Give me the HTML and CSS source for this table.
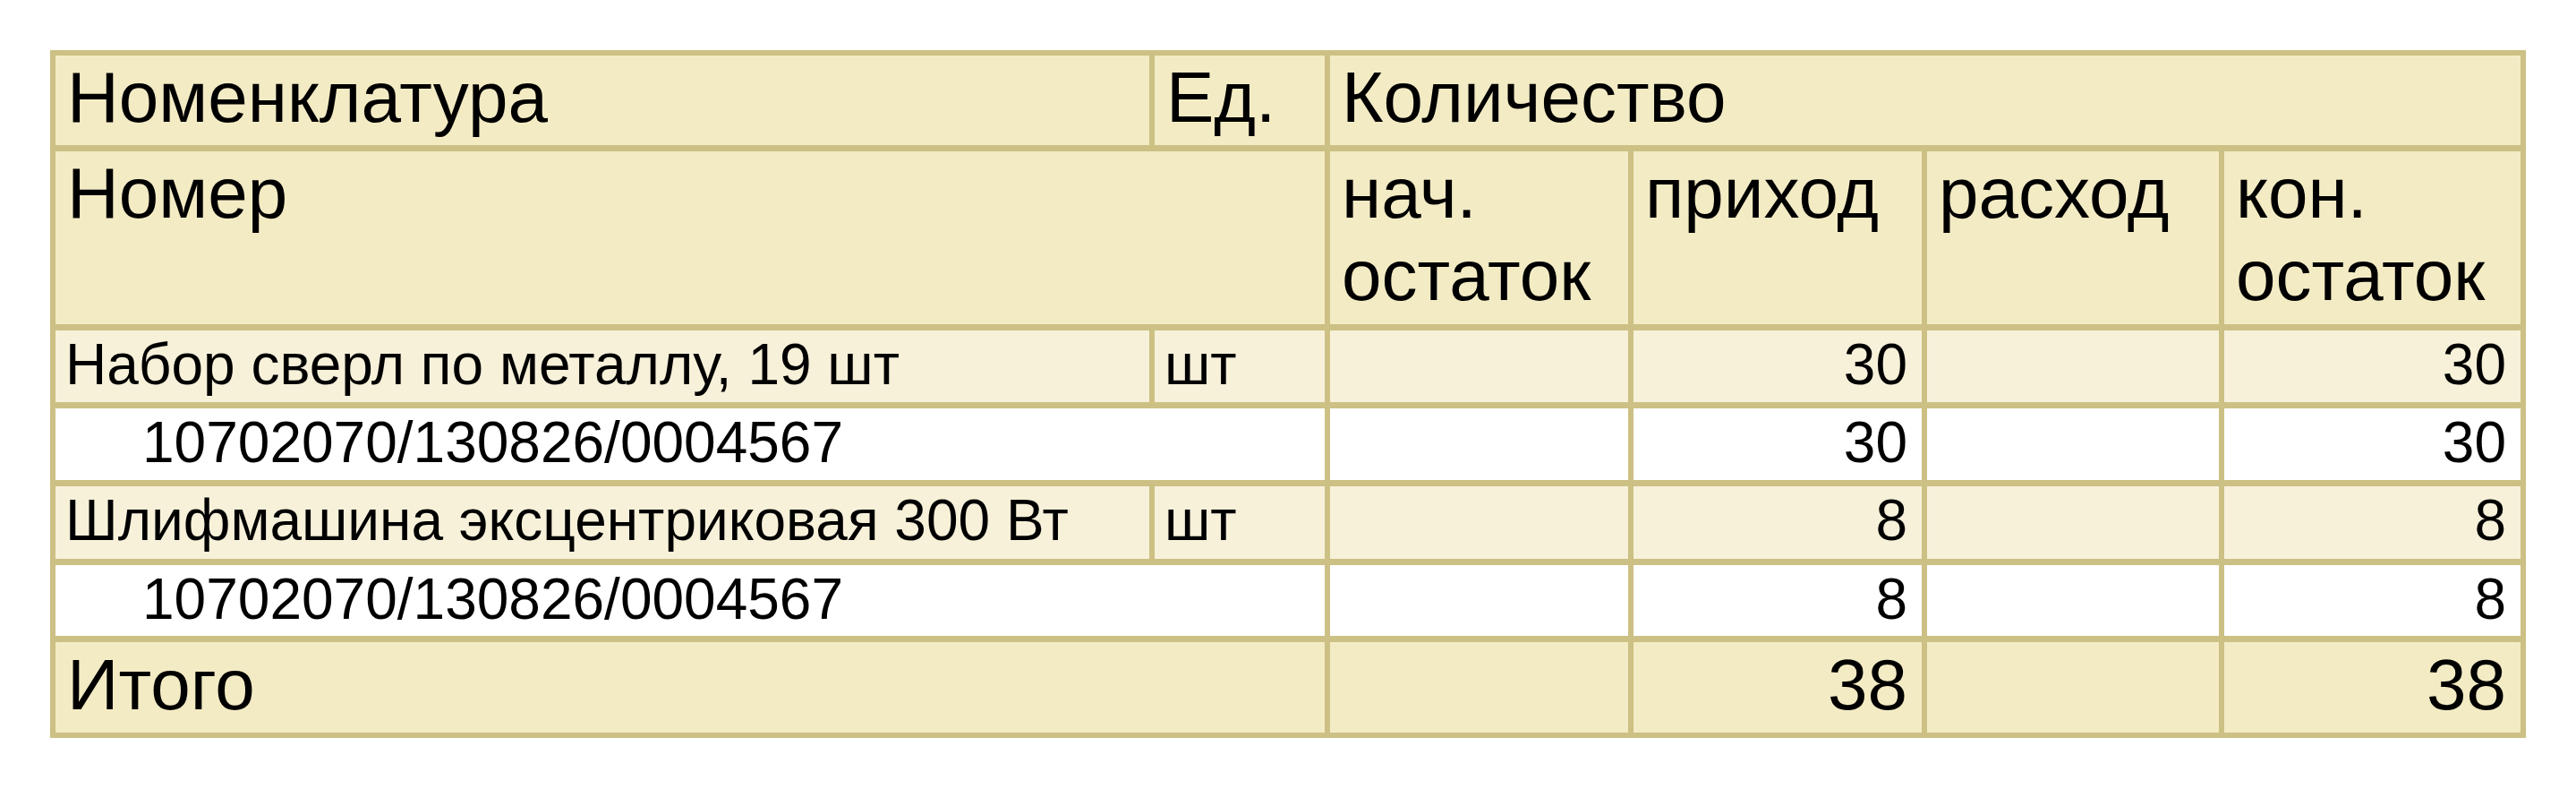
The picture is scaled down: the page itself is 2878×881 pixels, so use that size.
FILE: index.html
```html
<!DOCTYPE html>
<html lang="ru">
<head>
<meta charset="utf-8">
<title>Ведомость</title>
<link rel="stylesheet" href="styles.css">
</head>
<body>
<div class="sheet">
  <div class="cell head">Номенклатура</div>
  <div class="cell head">Ед.</div>
  <div class="cell head span4">Количество</div>

  <div class="cell head span2 tall">Номер</div>
  <div class="cell head tall">нач. остаток</div>
  <div class="cell head tall">приход</div>
  <div class="cell head tall">расход</div>
  <div class="cell head tall">кон. остаток</div>

  <div class="cell item">Набор сверл по металлу, 19 шт</div>
  <div class="cell item">шт</div>
  <div class="cell item num"></div>
  <div class="cell item num">30</div>
  <div class="cell item num"></div>
  <div class="cell item num">30</div>

  <div class="cell sub span2 indent">10702070/130826/0004567</div>
  <div class="cell sub num"></div>
  <div class="cell sub num">30</div>
  <div class="cell sub num"></div>
  <div class="cell sub num">30</div>

  <div class="cell item">Шлифмашина эксцентриковая 300 Вт</div>
  <div class="cell item">шт</div>
  <div class="cell item num"></div>
  <div class="cell item num">8</div>
  <div class="cell item num"></div>
  <div class="cell item num">8</div>

  <div class="cell sub span2 indent">10702070/130826/0004567</div>
  <div class="cell sub num"></div>
  <div class="cell sub num">8</div>
  <div class="cell sub num"></div>
  <div class="cell sub num">8</div>

  <div class="cell total span2">Итого</div>
  <div class="cell total num"></div>
  <div class="cell total num">38</div>
  <div class="cell total num"></div>
  <div class="cell total num">38</div>
</div>
</body>
</html>
```
FILE: styles.css
```css
html, body {
  margin: 0;
  padding: 0;
  background: #ffffff;
}

body {
  font-family: "Liberation Sans", Arial, sans-serif;
  color: #000000;
}

.sheet {
  margin: 56px 0 0 56px;
  width: 2766px;
  box-sizing: border-box;
  display: grid;
  grid-template-columns: 1222px 190px 333px 322px 326px 331px;
  grid-template-rows: 100px 193px 80px 80px 81px 79px 101px;
  column-gap: 6px;
  row-gap: 7px;
  padding: 6px;
  background: #ccc084;
}

.cell {
  box-sizing: border-box;
  padding: 1px 10px 0 13px;
  overflow: hidden;
}

.span2 { grid-column: span 2; }
.span4 { grid-column: span 4; }

.head {
  background: #f3ebc4;
  font-size: 80px;
  line-height: 92px;
}

.item {
  background: #f7f1da;
  font-size: 64px;
  line-height: 74px;
  padding-left: 11px;
}

.sub {
  background: #ffffff;
  font-size: 64px;
  line-height: 74px;
}

.indent {
  padding-left: 97px;
}

.total {
  background: #f3ebc4;
  font-size: 80px;
  line-height: 92px;
  padding-top: 2px;
}

.num {
  text-align: right;
  padding-right: 16px;
}
```
